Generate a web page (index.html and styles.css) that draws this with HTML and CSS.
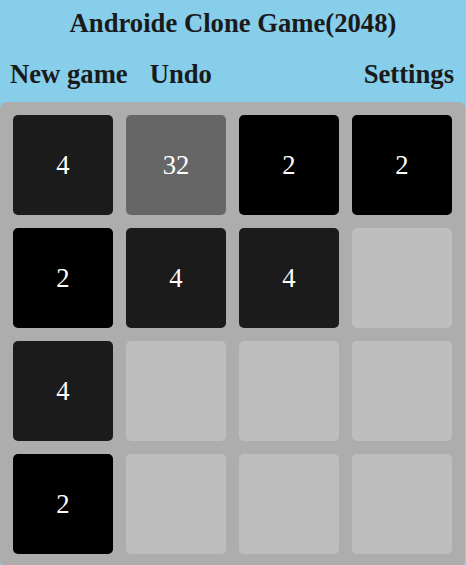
FILE: index.html
```html
<!DOCTYPE html>
<html lang="en">
<head>
    <meta charset="UTF-8">
    <meta name="viewport" content="width=device-width, initial-scale=1.0">
    <title>2048</title>
    <link rel="stylesheet" href="styles.css">
</head>
<body>
    <h1 class="titulo">Androide Clone Game(2048)</h1>
    <div class="menu">
        <span class="opcao">New game</span>
        <span class="opcao">Undo</span>
        <span class="opcao direita">Settings</span>
    </div>
    <div class="tabuleiro">
        <div class="celula v4">4</div>
        <div class="celula v32">32</div>
        <div class="celula v2">2</div>
        <div class="celula v2">2</div>

        <div class="celula v2">2</div>
        <div class="celula v4">4</div>
        <div class="celula v4">4</div>
        <div class="celula"></div>

        <div class="celula v4">4</div>
        <div class="celula"></div>
        <div class="celula"></div>
        <div class="celula"></div>

        <div class="celula v2">2</div>
        <div class="celula"></div>
        <div class="celula"></div>
        <div class="celula"></div>
    </div>
</body>
</html>
```

FILE: styles.css
```css
body {
    font-family: "Liberation Serif", "Times New Roman", serif;
    background-color: #87ceeb;
    margin: 0;
    color: #1a1a1a;
}
.titulo {
    font-size: 20pt;
    line-height: 30px;
    text-align: center;
    margin: 0;
    padding-top: 8px;
}
.menu {
    display: flex;
    margin: 21px 0 13px;
    padding: 0 12px 0 10px;
    line-height: 30px;
    font-size: 20pt;
    font-weight: bold;
}
.opcao {
    margin-right: 22px;
}
.opcao.direita {
    margin-left: auto;
    margin-right: 0;
}
.tabuleiro {
    width: 439px;
    display: grid;
    grid-template-columns: repeat(4, 100px);
    grid-auto-rows: 100px;
    gap: 13px;
    padding: 13px;
    background-color: #adadad;
    border-radius: 6px;
}
.celula {
    background-color: #bebebe;
    border-radius: 5px;
    display: flex;
    justify-content: center;
    align-items: center;
    font-size: 20pt;
    color: #fff;
}
.v2 {
    background-color: #000;
}
.v4 {
    background-color: #1b1b1b;
}
.v32 {
    background-color: #666;
}
```
